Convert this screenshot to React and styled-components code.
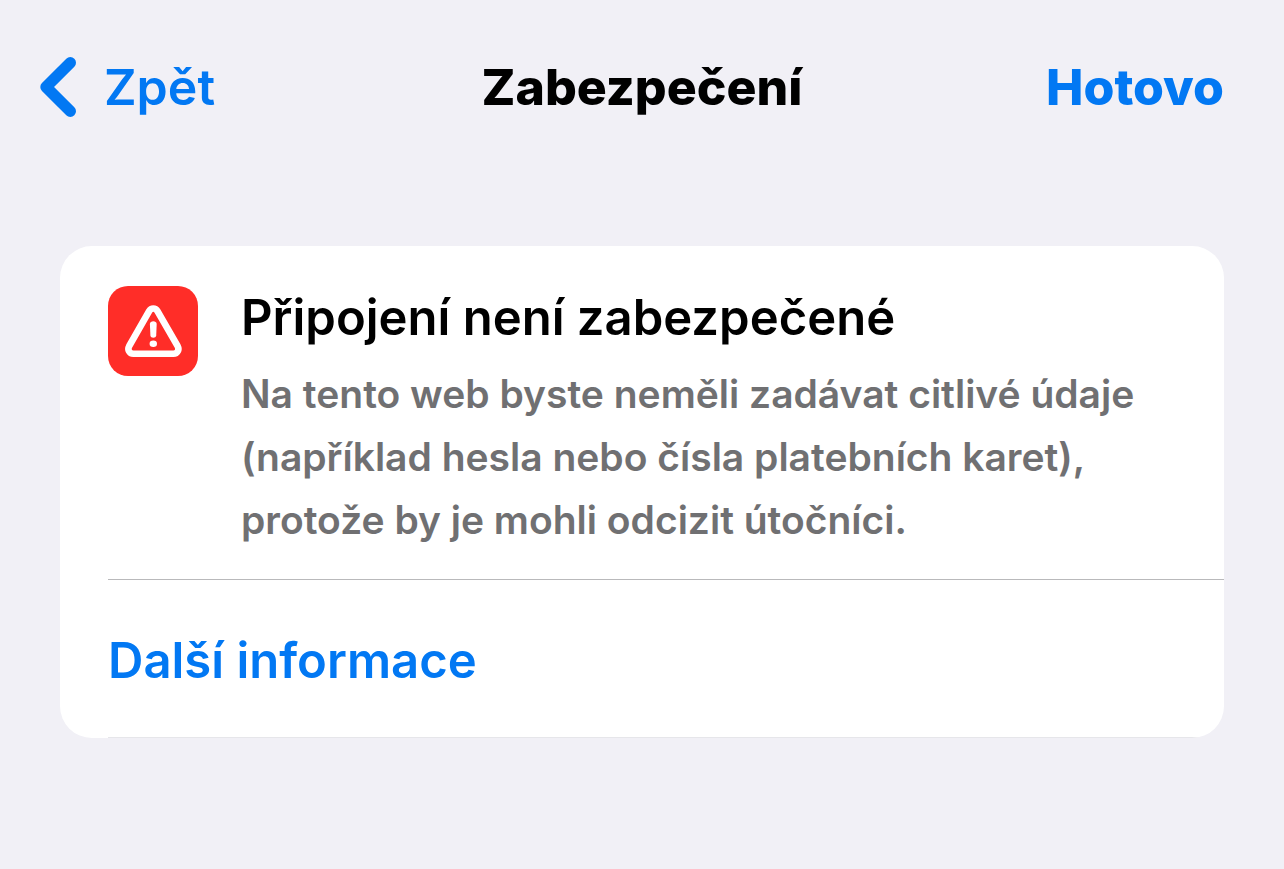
import styled, { createGlobalStyle, css } from 'styled-components';

const colorBackground = '#f1f0f6';
const colorCard = '#ffffff';
const colorDivider = '#b9b9bb';
const colorDividerLight = '#e6e6ea';
const textBlue = '#0278f3';
const textBlack = '#000000';
const textGray = '#707072';
const warningRed = '#ff2d28';

const GlobalStyle = createGlobalStyle`
  *,
  *::before,
  *::after {
    box-sizing: border-box;
  }

  body {
    margin: 0;
    background: ${colorBackground};
    font-family: Inter, "Liberation Sans", sans-serif;
  }
`;

const NavBar = styled.header`
  display: grid;
  grid-template-columns: 1fr auto 1fr;
  align-items: center;
  padding: 57px 60px 57px 40px;
`;

const NavTitle = styled.h1`
  margin: 0;
  padding-left: 20px;
  font-size: 50px;
  font-weight: 800;
  line-height: 60px;
  color: ${textBlack};
`;

const NavButton = styled.button`
  display: flex;
  align-items: center;
  gap: 28px;
  justify-self: start;
  margin: 0;
  padding: 0;
  border: 0;
  background: none;
  font-family: inherit;
  font-size: 50px;
  font-weight: 600;
  line-height: 60px;
  color: ${textBlue};
  cursor: pointer;

  ${({ $primary }) =>
    $primary &&
    css`
      justify-self: end;
      font-weight: 800;
    `
  }
`;

const Chevron = styled.svg`
  flex: 0 0 auto;
  width: 36px;
  height: 60px;
`;

const Content = styled.main`
  padding: 72px 60px;
`;

const Card = styled.section`
  overflow: hidden;
  padding-left: 48px;
  border-radius: 32px;
  background: ${colorCard};
`;

const CardRow = styled.div`
  display: flex;
  align-items: flex-start;
  gap: 43px;
  padding: 40px 48px 28px 0;
  border-bottom: 1px solid ${colorDivider};

  ${({ $last }) =>
    $last &&
    css`
      padding: 51px 48px 46px 0;
      border-color: ${colorDividerLight};
    `
  }
`;

const WarningBadge = styled.div`
  flex: 0 0 auto;
  width: 90px;
  height: 90px;
  border-radius: 20px;
  background: ${warningRed};
`;

const WarningText = styled.div`
  flex: 1 1 auto;
`;

const WarningTitle = styled.h2`
  margin: 0 0 12px;
  font-size: 49px;
  font-weight: 600;
  line-height: 64px;
  color: ${textBlack};
`;

const WarningBody = styled.p`
  margin: 0;
  font-size: 39px;
  font-weight: 600;
  line-height: 63px;
  color: ${textGray};
`;

const MoreLink = styled.a`
  font-size: 49px;
  font-weight: 600;
  line-height: 60px;
  color: ${textBlue};
  text-decoration: none;
`;

const WarningIcon = () => (
  <svg width="90" height="90" viewBox="0 0 90 90" fill="none" aria-hidden="true">
    <path
      d="M41.2 25 L21.2 60 C19.2 63.8 21.2 67.7 25.4 67.7 H65.4 C69.6 67.7 71.6 63.8 69.6 60 L49.4 25 C47.4 21.6 43.2 21.6 41.2 25 Z"
      stroke="#fff"
      strokeWidth="6.6"
      strokeLinejoin="round"
    />
    <path
      d="M41.9 38 C41.9 34.2 48.7 34.2 48.7 38 L48.2 49.6 C48 52.6 42.6 52.6 42.4 49.6 Z"
      fill="#fff"
    />
    <ellipse cx="45.3" cy="57.8" rx="3.7" ry="3.3" fill="#fff" />
  </svg>
);

function App() {
  return (
    <>
      <GlobalStyle />
      <NavBar>
        <NavButton type="button">
          <Chevron viewBox="0 0 36 60" fill="none" aria-hidden="true">
            <path
              d="M30.3 5.7 L6 30 L30.3 54.3"
              stroke="currentColor"
              strokeWidth="11.4"
              strokeLinecap="round"
              strokeLinejoin="round"
            />
          </Chevron>
          Zpět
        </NavButton>
        <NavTitle>Zabezpečení</NavTitle>
        <NavButton type="button" $primary>Hotovo</NavButton>
      </NavBar>
      <Content>
        <Card>
          <CardRow>
            <WarningBadge>
              <WarningIcon />
            </WarningBadge>
            <WarningText>
              <WarningTitle>Připojení není zabezpečené</WarningTitle>
              <WarningBody>
                Na tento web byste neměli zadávat citlivé údaje (například hesla
                nebo čísla platebních karet), protože by je mohli odcizit útočníci.
              </WarningBody>
            </WarningText>
          </CardRow>
          <CardRow $last>
            <MoreLink href="#more">Další informace</MoreLink>
          </CardRow>
        </Card>
      </Content>
    </>
  );
}

export default App;
